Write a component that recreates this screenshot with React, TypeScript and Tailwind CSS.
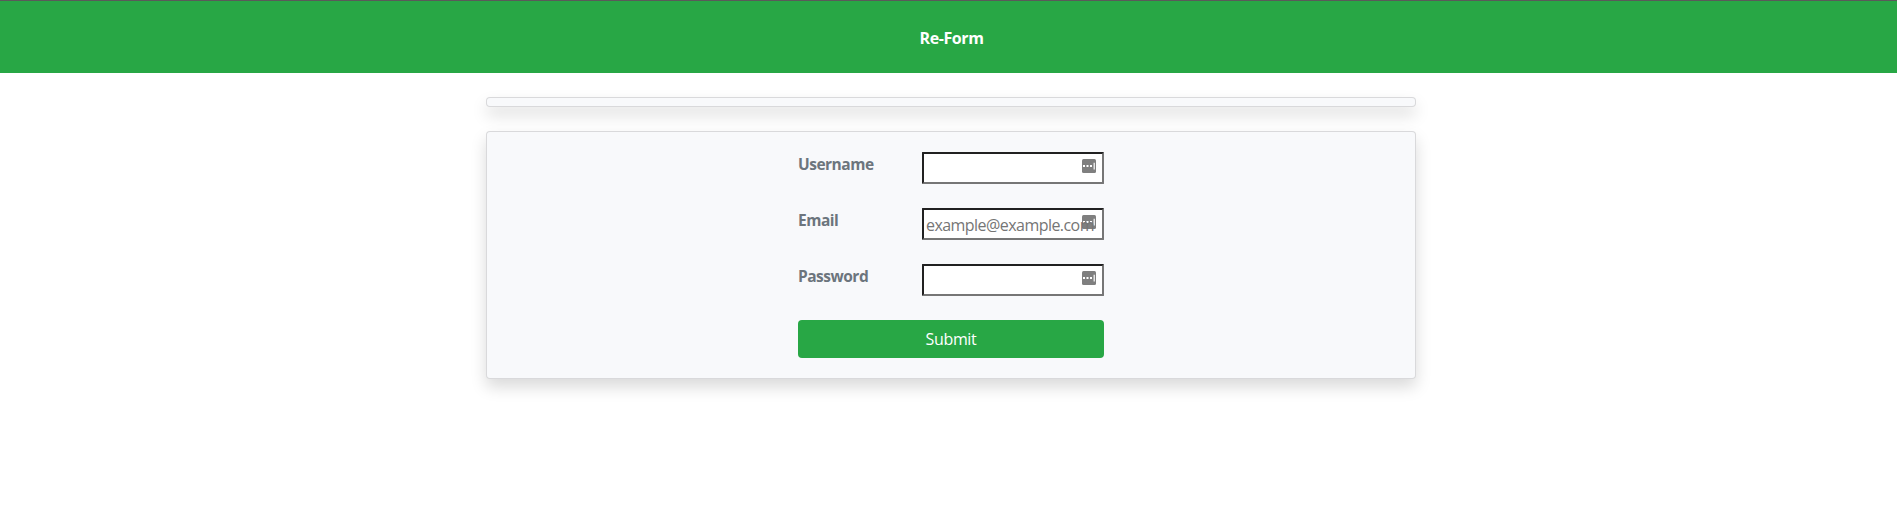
function FillIcon() {
  return (
    <svg viewBox="0 0 14 14" className="pointer-events-none absolute right-[8px] top-[7px] h-[14px] w-[14px]">
      <rect width="14" height="14" rx="1.5" fill="#7f7f7f" />
      <path d="M1 6h2v2H1zM4.5 6h2v2h-2zM8 6h2v2H8z" fill="#fff" />
      <path d="M11.6 3.7h1.2v6.8h-1.2z" fill="#fff" />
    </svg>
  );
}

function Field({ label, type, placeholder }: { label: string; type: string; placeholder?: string }) {
  return (
    <label className="flex h-8 justify-between">
      <span className="text-[15.5px] font-bold leading-[25px] tracking-[-0.5px] text-[#6c757d]">{label}</span>
      <span className="relative block h-8 w-[182px] bg-white">
        <FillIcon />
        <input
          type={type}
          placeholder={placeholder}
          className="relative block h-8 w-full rounded-[1px] border-2 border-b-[#767676] border-l-[#212121] border-r-[#767676] border-t-[#212121] bg-transparent px-[2px] pt-px text-[16px] tracking-[-0.55px] outline-none placeholder:text-[#757575]"
        />
      </span>
    </label>
  );
}

export default function App() {
  return (
    <div className="min-h-[532px] overflow-hidden bg-white font-['Open_Sans','Noto_Sans',sans-serif]">
      <header className="flex h-[73px] items-center justify-center border-t border-[#5a5a5a] bg-[#28a745] pl-[6px] pt-px">
        <h1 className="text-[16px] font-bold leading-6 tracking-[-0.4px] text-white">Re-Form</h1>
      </header>
      <main className="ml-[486px] mt-6 flex w-[930px] flex-col gap-6">
        <div className="h-[10px] rounded border border-black/[0.125] bg-[#f8f9fb] shadow-[0_8px_16px_rgba(0,0,0,0.15)]" />
        <div className="flex h-[248px] justify-center rounded border border-black/[0.125] bg-[#f8f9fb] pt-5 shadow-[0_8px_16px_rgba(0,0,0,0.15)]">
          <form className="flex w-[306px] flex-col gap-6" onSubmit={(e) => e.preventDefault()}>
            <Field label="Username" type="text" />
            <Field label="Email" type="email" placeholder="example@example.com" />
            <Field label="Password" type="password" />
            <button className="h-[38px] rounded bg-[#28a745] text-[16px] leading-6 tracking-[-0.35px] text-white">Submit</button>
          </form>
        </div>
      </main>
    </div>
  );
}
